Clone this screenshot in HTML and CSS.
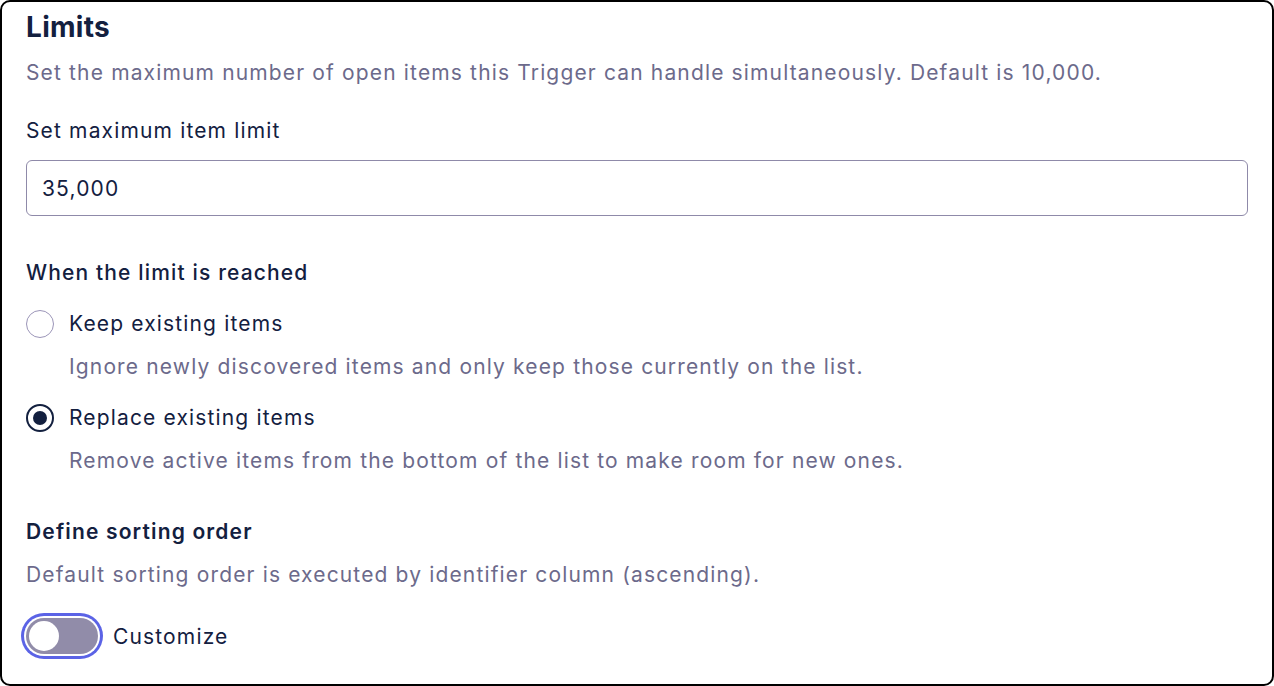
FILE: index.html
```html
<!DOCTYPE html>
<html lang="en">
<head>
  <meta charset="UTF-8">
  <meta name="viewport" content="width=device-width, initial-scale=1.0">
  <title>Limits</title>
  <link rel="stylesheet" href="styles.css">
</head>
<body>
  <div class="card">
    <h1 class="title">Limits</h1>
    <p class="hint">Set the maximum number of open items this Trigger can handle simultaneously. Default is 10,000.</p>

    <label class="field-label" for="item-limit">Set maximum item limit</label>
    <input type="text" id="item-limit" class="text-input" value="35,000">

    <div class="group-title">When the limit is reached</div>

    <label class="radio-row">
      <span class="radio"></span>
      <span class="radio-label">Keep existing items</span>
    </label>
    <p class="hint indent">Ignore newly discovered items and only keep those currently on the list.</p>

    <label class="radio-row radio-row-second">
      <span class="radio checked"></span>
      <span class="radio-label">Replace existing items</span>
    </label>
    <p class="hint indent">Remove active items from the bottom of the list to make room for new ones.</p>

    <div class="section-title">Define sorting order</div>
    <p class="hint">Default sorting order is executed by identifier column (ascending).</p>

    <div class="toggle-row">
      <span class="toggle"><span class="knob"></span></span>
      <span class="toggle-label">Customize</span>
    </div>
  </div>
</body>
</html>
```

FILE: styles.css
```css
* {
  box-sizing: border-box;
}

body {
  font-family: Inter, 'Noto Sans', sans-serif;
  margin: 0;
  padding: 0;
  background-color: #fff;
  color: #13203f;
  height: 100vh;
  overflow: hidden;
  letter-spacing: 1.15px;
}

.card {
  height: 686px;
  border: 2px solid #000;
  border-radius: 10px;
  padding: 7px 24px 0;
  display: flex;
  flex-direction: column;
  align-items: flex-start;
}

.title {
  margin: 0;
  font-size: 28px;
  line-height: 36px;
  font-weight: 700;
  letter-spacing: 0.3px;
}

.hint {
  margin: 14px 0 0;
  font-size: 21px;
  line-height: 28px;
  color: #6c6a8b;
}

.hint.indent {
  margin-top: 15px;
  padding-left: 43px;
}

.field-label {
  margin-top: 30px;
  font-size: 21px;
  line-height: 28px;
}

.text-input {
  margin-top: 15px;
  width: 100%;
  height: 56px;
  padding: 0 15px;
  border: 1px solid #8f8aa9;
  border-radius: 6px;
  font-family: inherit;
  font-size: 21px;
  letter-spacing: 1.15px;
  color: #13203f;
  outline: none;
}

.group-title {
  margin-top: 43px;
  font-size: 21px;
  line-height: 28px;
  font-weight: 500;
}

.radio-row {
  margin-top: 23px;
  display: flex;
  align-items: center;
  gap: 15px;
  font-size: 21px;
  line-height: 28px;
}

.radio {
  width: 28px;
  height: 28px;
  border-radius: 50%;
  border: 1px solid #9b95b8;
  display: flex;
  justify-content: center;
  align-items: center;
}

.radio.checked {
  border: 2px solid #13203f;
}

.radio.checked::after {
  content: "";
  width: 14px;
  height: 14px;
  border-radius: 50%;
  background-color: #13203f;
}

.section-title {
  margin-top: 43px;
  font-size: 21px;
  line-height: 28px;
  font-weight: 600;
}

.section-title + .hint {
  margin-top: 15px;
}

.toggle-row {
  margin-top: 29px;
  display: flex;
  align-items: center;
  gap: 15px;
  font-size: 21px;
}

.toggle {
  width: 72px;
  height: 36px;
  border-radius: 18px;
  background-color: #918ca9;
  padding: 3px;
  box-shadow: 0 0 0 2px #fff, 0 0 0 5px #5b63e6;
  display: flex;
}

.knob {
  width: 30px;
  height: 30px;
  border-radius: 50%;
  background-color: #fff;
}
```
